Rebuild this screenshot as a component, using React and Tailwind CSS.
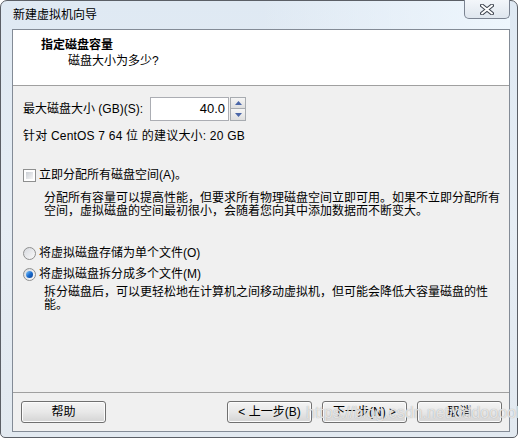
import React from "react";

const font = { fontFamily: "'Liberation Sans', 'Noto Sans CJK SC', sans-serif" };

function Btn({ children }) {
  return (
    <div className="w-[85px] h-[22px] rounded-[3px] border border-[#707070] bg-gradient-to-b from-[#f4f4f4] via-[#e8e8e8] to-[#d4d4d4] flex items-center justify-center text-[12px] leading-[14px] text-black shadow-[inset_0_0_0_1px_#fcfcfc]">
      {children}
    </div>
  );
}

function Checkbox() {
  return (
    <div className="w-[13px] h-[13px] border border-[#8e8f8f] bg-white p-[2px]">
      <div className="w-full h-full bg-gradient-to-br from-[#cbcfd5] to-[#f6f6f6]" />
    </div>
  );
}

function Radio({ checked }) {
  return (
    <div className="w-[13px] h-[13px] rounded-full border border-[#8e8f8f] bg-gradient-to-br from-[#d6d9de] to-[#fafafa] flex items-center justify-center">
      {checked && <div className="w-[7px] h-[7px] rounded-full bg-gradient-to-br from-[#8ad0ff] via-[#1c6fd0] to-[#0b3f96]" />}
    </div>
  );
}

export default function App() {
  return (
    <div className="w-[518px] h-[440px] bg-white relative text-black" style={font}>
      <div className="h-[438px] border border-[#5b5f66] rounded-t-[7px] rounded-b-[5px] bg-gradient-to-b from-[#dfe9f3] via-[#e6edf4] to-[#e2e9f0] flex flex-col pl-[11px] pr-[7px] pb-[5px]">
        <div className="h-[28px] flex justify-between bg-gradient-to-r from-transparent via-transparent to-[#eef6fd]">
          <div className="pt-[7px] pl-[1px] text-[12px] leading-[15px]">新建虚拟机向导</div>
          <div className="w-[46px] h-[19px] -mt-[1px] border border-t-0 border-[#7b8391] rounded-b-[5px] bg-gradient-to-b from-[#f3f6fa] to-[#dfe6ee] flex items-center justify-center">
            <svg width="14" height="11" viewBox="0 0 14 11">
              <path d="M2 1.5 L12 9.5 M12 1.5 L2 9.5" stroke="#3f4550" strokeWidth="4" strokeLinecap="round" />
              <path d="M2 1.5 L12 9.5 M12 1.5 L2 9.5" stroke="#ffffff" strokeWidth="2" strokeLinecap="round" />
            </svg>
          </div>
        </div>

        <div className="flex-1 border border-[#838b96] bg-[#f0f0f0] flex flex-col">
          <div className="h-[56px] bg-white border-b border-[#a0a0a0] shrink-0">
            <div className="pt-[8px] pl-[28px] text-[12px] leading-[15px] font-bold">指定磁盘容量</div>
            <div className="pt-[1px] pl-[55px] text-[12px] leading-[15px]">磁盘大小为多少?</div>
          </div>

          <div className="px-[10px] text-[12px]">
            <div className="pt-[11px] flex items-center h-[35px]">
              <div className="w-[127px] leading-[14px]">最大磁盘大小 (GB)(S):</div>
              <div className="w-[79px] h-[24px] border border-[#abadb3] bg-white flex items-center justify-end pr-[3px] text-[13px]">40.0</div>
              <div className="ml-[1px] w-[16px] h-[24px] flex flex-col">
                <div className="h-[12px] border border-[#a7abb0] bg-gradient-to-b from-[#f6f6f6] to-[#dedede] flex items-center justify-center">
                  <svg width="7" height="4" viewBox="0 0 7 4"><path d="M0 4 L3.5 0 L7 4 Z" fill="#4a66a8" /></svg>
                </div>
                <div className="h-[12px] border border-t-0 border-[#a7abb0] bg-gradient-to-b from-[#f6f6f6] to-[#dedede] flex items-center justify-center">
                  <svg width="7" height="4" viewBox="0 0 7 4"><path d="M0 0 L7 0 L3.5 4 Z" fill="#4a66a8" /></svg>
                </div>
              </div>
            </div>

            <div className="mt-[8px] leading-[14px] tracking-[0.2px]">针对 CentOS 7 64 位 的建议大小: 20 GB</div>

            <div className="mt-[25px] flex items-center gap-[3px] leading-[14px]">
              <Checkbox />
              <span>立即分配所有磁盘空间(A)。</span>
            </div>
            <div className="mt-[10px] pl-[21px] leading-[13px] whitespace-nowrap">
              分配所有容量可以提高性能，但要求所有物理磁盘空间立即可用。如果不立即分配所有
              <br />
              空间，虚拟磁盘的空间最初很小，会随着您向其中添加数据而不断变大。
            </div>

            <div className="mt-[28px] flex items-center gap-[3px] leading-[14px]">
              <Radio />
              <span>将虚拟磁盘存储为单个文件(O)</span>
            </div>
            <div className="mt-[7px] flex items-center gap-[3px] leading-[14px]">
              <Radio checked />
              <span>将虚拟磁盘拆分成多个文件(M)</span>
            </div>
            <div className="mt-[5px] pl-[21px] leading-[13px] whitespace-nowrap">
              拆分磁盘后，可以更轻松地在计算机之间移动虚拟机，但可能会降低大容量磁盘的性
              <br />
              能。
            </div>
          </div>

          <div className="flex-1" />

          <div className="border-t border-[#a0a0a0] pt-[8px] pb-[8px] pl-[8px] pr-[7px] flex">
            <Btn>帮助</Btn>
            <div className="ml-auto flex gap-[10px]">
              <Btn>&lt; 上一步(B)</Btn>
              <Btn>下一步(N) &gt;</Btn>
              <Btn>取消</Btn>
            </div>
          </div>
        </div>
      </div>

      <div className="absolute left-[306px] top-[404px] text-[16px] leading-[18px] text-white/70 [text-shadow:0_0_1px_#9a9a9a] pointer-events-none">
        https://blog.csdn.net/dddooool
      </div>
    </div>
  );
}
